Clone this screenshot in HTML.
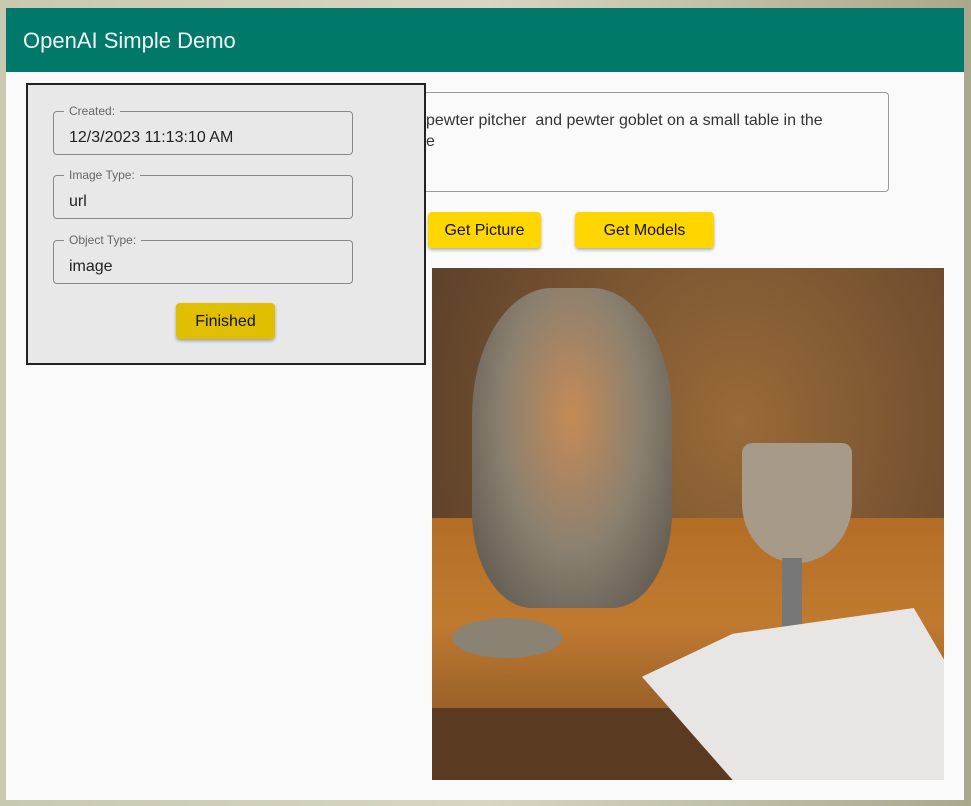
<!DOCTYPE html>
<html><head><style>
body{margin:0;width:971px;height:806px;background:linear-gradient(90deg,#c9c8b0,#d8d6c2 50%,#a9a88c);font-family:"Liberation Sans",sans-serif;position:relative;overflow:hidden}
.main{position:absolute;left:6px;top:8px;width:958px;height:792px;background:#fafafa}
.hdr{position:absolute;left:6px;top:8px;width:958px;height:64px;background:#00796b;color:#f0f5f3;font-size:22px;line-height:66px;text-indent:17px}
.ta{position:absolute;left:380px;top:92px;width:507px;height:98px;border:1px solid #999;border-radius:4px;font-size:16px;color:#333;line-height:21px}
.btn{position:absolute;top:212px;height:36px;background:#ffd600;border-radius:4px;font-size:16px;line-height:38px;text-align:center;color:#111;box-shadow:0 2px 3px rgba(0,0,0,.3)}
.dlg{position:absolute;left:26px;top:83px;width:396px;height:278px;background:#e8e8e8;border:2px solid #222}
.f{position:absolute;left:25px;width:298px;height:42px;border:1px solid #888;border-radius:4px}
.f .l{position:absolute;left:10px;top:-8px;background:#e8e8e8;padding:0 5px;font-size:12px;color:#666}
.f .v{position:absolute;left:15px;top:17px;font-size:16px;color:#222}
.pic{position:absolute;left:432px;top:268px;width:512px;height:512px;overflow:hidden;background:radial-gradient(ellipse at 60% 30%,#9a6a38,#6a4a2e 60%,#4a3424)}
</style></head><body>
<div class="main"></div>
<div class="hdr">OpenAI Simple Demo</div>
<div class="ta"><div style="position:absolute;left:45px;top:17px">pewter pitcher&nbsp; and pewter goblet on a small table in the</div><div style="position:absolute;left:45px;top:38px">e</div></div>
<div class="btn" style="left:428px;width:113px">Get Picture</div>
<div class="btn" style="left:575px;width:139px">Get Models</div>
<div class="pic">
<div style="position:absolute;left:0;top:250px;width:512px;height:262px;background:linear-gradient(180deg,#b36d26,#c07a30 40%,#7a4c24)"></div>
<div style="position:absolute;left:0;top:440px;width:512px;height:72px;background:#5a3a20"></div>
<div style="position:absolute;left:40px;top:20px;width:200px;height:320px;border-radius:40% 40% 30% 30%;background:radial-gradient(ellipse at 50% 40%,#c58a56,#8a8070 50%,#555048)"></div>
<div style="position:absolute;left:310px;top:175px;width:110px;height:120px;border-radius:10px 10px 50% 50%;background:#a89a88"></div>
<div style="position:absolute;left:350px;top:290px;width:20px;height:70px;background:#777"></div>
<div style="position:absolute;left:20px;top:350px;width:110px;height:40px;border-radius:50%;background:#8a8272"></div>
<div style="position:absolute;left:210px;top:340px;width:302px;height:172px;background:#e8e6e4;clip-path:polygon(0 40%,30% 15%,90% 0,100% 30%,100% 100%,30% 100%)"></div>
</div>
<div class="dlg">
<div class="f" style="top:26px"><span class="l">Created:</span><span class="v">12/3/2023 11:13:10 AM</span></div>
<div class="f" style="top:90px"><span class="l">Image Type:</span><span class="v">url</span></div>
<div class="f" style="top:155px"><span class="l">Object Type:</span><span class="v">image</span></div>
<div style="position:absolute;left:148px;top:218px;width:99px;height:36px;background:#e0bf00;border-radius:4px;text-align:center;line-height:38px;font-size:16px;color:#111;box-shadow:0 2px 3px rgba(0,0,0,.3)">Finished</div>
</div>
</body></html>
